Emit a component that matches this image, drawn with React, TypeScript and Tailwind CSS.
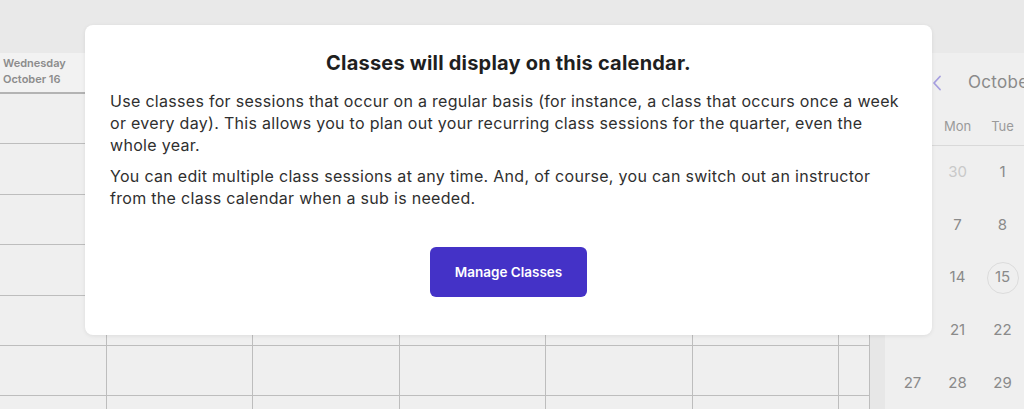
import React from "react";

const font = { fontFamily: "Inter, 'Noto Sans', sans-serif" };

const rows = [0, 1, 2, 3, 4, 5, 6];
const cols = [
  { w: "w-[107px]", day: "Wednesday", date: "October 16" },
  { w: "w-[146.4px]", day: "Thursday", date: "October 17" },
  { w: "w-[146.4px]", day: "Friday", date: "October 18" },
  { w: "w-[146.4px]", day: "Saturday", date: "October 19" },
  { w: "w-[146.4px]", day: "Sunday", date: "October 20" },
  { w: "w-[146.4px]", day: "Monday", date: "October 21" },
  { w: "w-[31px]", day: "", date: "" },
];

const weeks = [
  [29, 30, 1, 2, 3, 4, 5],
  [6, 7, 8, 9, 10, 11, 12],
  [13, 14, 15, 16, 17, 18, 19],
  [20, 21, 22, 23, 24, 25, 26],
  [27, 28, 29, 30, 31, 1, 2],
];
const dayNames = ["Sun", "Mon", "Tue", "Wed", "Thu", "Fri", "Sat"];

export default function App() {
  return (
    <div className="relative w-[1024px] h-[409px] overflow-hidden bg-[#e9e9e9]" style={font}>
      <div className="h-[53px]" />
      <div className="flex h-[356px]">
        {/* week grid */}
        <div className="flex w-[870px] shrink-0 bg-[#efefef]">
          {cols.map((c, i) => (
            <div key={i} className={`${c.w} shrink-0 border-r border-[#bdbdbd] flex flex-col`}>
              <div className="h-[41px] shrink-0 border-b-2 border-[#b3b3b3] bg-[#f2f2f2] pl-[3px] pt-[2px] text-[11px] leading-[16px] font-semibold text-[#8c8c8c]">
                <div>{c.day}</div>
                <div>{c.date}</div>
              </div>
              {rows.map((r) => (
                <div key={r} className="h-[50.4px] shrink-0 border-b border-[#bdbdbd]" />
              ))}
            </div>
          ))}
        </div>
        <div className="w-[15px] shrink-0 bg-[#e7e7e7]" />
        {/* mini calendar */}
        <div className="flex-1 bg-[#efefef] pl-[5px]">
          <div className="flex items-center h-[20px] mt-[20px] pl-[42px] gap-[26px] whitespace-nowrap">
            <svg width="10" height="16" viewBox="0 0 10 16" fill="none" className="shrink-0">
              <path d="M8 1.5 L2 8 L8 14.5" stroke="#a69fe0" strokeWidth="1.8" strokeLinecap="round" strokeLinejoin="round" />
            </svg>
            <span className="text-[17px] tracking-[0.3px] text-[#8a8a8a]">October 2019</span>
          </div>
          <div className="mt-[23px] border-b border-[#d9d9d9] pb-[9px] flex w-[315px]">
            {dayNames.map((d) => (
              <div key={d} className="w-[45px] shrink-0 text-center text-[13px] leading-[20px] text-[#9a9a9a]">
                {d}
              </div>
            ))}
          </div>
          {weeks.map((w, wi) => (
            <div key={wi} className="flex h-[52.7px] items-center w-[315px]">
              {w.map((d, di) => {
                const muted = (wi === 0 && d > 20) || (wi === 4 && d < 10);
                const today = wi === 2 && d === 15;
                return (
                  <div key={di} className="w-[45px] shrink-0 flex justify-center">
                    <div
                      className={`w-[32px] h-[32px] rounded-full flex items-center justify-center text-[15px] ${
                        muted ? "text-[#c9c9c9]" : "text-[#8a8a8a]"
                      } ${today ? "border-[1.5px] border-[#dcdcdc]" : ""}`}
                    >
                      {d}
                    </div>
                  </div>
                );
              })}
            </div>
          ))}
        </div>
      </div>

      {/* modal */}
      <div className="absolute left-[85px] top-[25px] w-[847px] h-[310px] rounded-[8px] bg-white shadow-[0_1px_4px_rgba(0,0,0,0.08)] px-[25px] pt-[26px]">
        <h2 className="text-center text-[20px] leading-[24px] font-bold tracking-[0.2px] text-[#1f1f1f]">
          Classes will display on this calendar.
        </h2>
        <p className="mt-[15px] text-[16px] leading-[22px] tracking-[0.3px] text-[#2f2f2f]">
          Use classes for sessions that occur on a regular basis (for instance, a class that occurs once a week or every day). This allows you to plan out your recurring class sessions for the quarter, even the whole year.
        </p>
        <p className="mt-[9px] text-[16px] leading-[22px] tracking-[0.3px] text-[#2f2f2f]">
          You can edit multiple class sessions at any time. And, of course, you can switch out an instructor from the class calendar when a sub is needed.
        </p>
        <div className="mt-[38px] flex justify-center">
          <button className="w-[157px] h-[50px] rounded-[6px] bg-[#4432c7] text-white text-[13.5px] font-semibold">
            Manage Classes
          </button>
        </div>
      </div>
    </div>
  );
}
